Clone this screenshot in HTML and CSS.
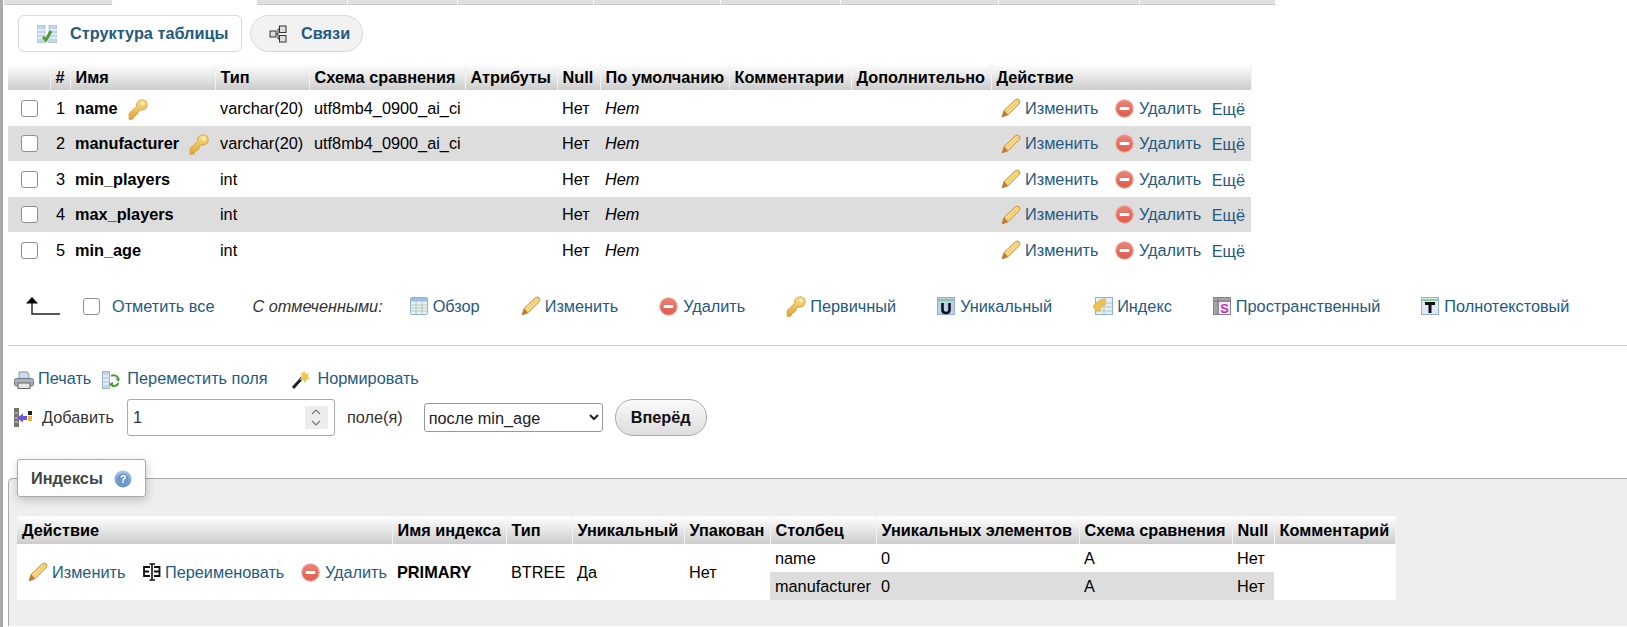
FILE: index.html
```html
<!DOCTYPE html>
<html lang="ru">
<head>
    <meta charset="UTF-8" />
    <title>Структура таблицы</title>
    <link rel="stylesheet" href="styles.css">
</head>
<body>

    <!-- shared icons -->
    <svg class="icon-defs" xmlns="http://www.w3.org/2000/svg">
        <defs>
            <linearGradient id="grad-key" x1="0" y1="0" x2="0" y2="1">
                <stop offset="0" stop-color="#fbe08a" />
                <stop offset="1" stop-color="#e0a52f" />
            </linearGradient>
            <linearGradient id="grad-del" x1="0" y1="0" x2="0" y2="1">
                <stop offset="0" stop-color="#ec8478" />
                <stop offset="1" stop-color="#dd5a4a" />
            </linearGradient>
            <linearGradient id="grad-help" x1="0" y1="0" x2="0" y2="1">
                <stop offset="0" stop-color="#a9c4e6" />
                <stop offset="1" stop-color="#5f8fc9" />
            </linearGradient>
        </defs>
        <symbol id="i-pencil" viewBox="0 0 20 20">
            <path d="M1 19 L3 12.5 L14.5 1.6 Q16.5 .4 18.2 2 Q19.6 3.8 18.3 5.4 L7 16.8 Z" fill="#f3cd6a" stroke="#c9953f" stroke-width="1" />
            <path d="M4.6 13 L15.6 2.6 M6.6 15 L17.4 4.4" stroke="#fbe9ae" stroke-width="1" fill="none" />
            <path d="M1 19 L3 12.5 L7 16.8 Z" fill="#b9793f" />
        </symbol>
        <symbol id="i-delete" viewBox="0 0 20 20">
            <circle cx="10" cy="10" r="9.2" fill="url(#grad-del)" stroke="#efa79d" stroke-width="1.2" />
            <rect x="5" y="8.4" width="10" height="3.2" rx=".6" fill="#fff" />
        </symbol>
        <symbol id="i-key" viewBox="0 0 20 21">
            <path d="M1 14.5 L8.5 7.5 Q8 3 11.5 1.2 Q15.5 -.2 18.3 2.4 Q20.4 5.6 18.2 9.2 Q15 12 11.8 11 L10 13 L10 15 L8 15 L8 17 L6 17 L5 20 L1.2 20.4 Z" fill="url(#grad-key)" stroke="#d19a34" stroke-width=".8" />
            <circle cx="14.8" cy="5" r="1.7" fill="#fdf3c8" />
        </symbol>
        <symbol id="i-struct" viewBox="0 0 20 18">
            <rect x="0" y="0" width="8" height="18" fill="#c3d5ec" stroke="#9db6d6" stroke-width=".8" />
            <rect x="12" y="0" width="8" height="18" fill="#c3d5ec" stroke="#9db6d6" stroke-width=".8" />
            <path d="M0 5 H8 M0 9 H8 M0 13 H8 M12 5 H20 M12 9 H20 M12 13 H20" stroke="#fff" stroke-width="1" />
            <path d="M6 12 L9 15 L14 6" fill="none" stroke="#4f9d2e" stroke-width="3" />
        </symbol>
        <symbol id="i-relation" viewBox="0 0 18 18">
            <path d="M6 9 H9 M9 4 V14 M9 4 H11 M9 14 H11" stroke="#333" stroke-width="1" fill="none" />
            <rect x="1" y="6" width="6" height="6" fill="#ddd" stroke="#333" />
            <rect x="10.5" y="1" width="6.5" height="6.5" fill="#ddd" stroke="#333" />
            <rect x="10.5" y="10.5" width="6.5" height="6.5" fill="#ddd" stroke="#333" />
        </symbol>
        <symbol id="i-arrow" viewBox="0 0 36 18">
            <path d="M8 3 V17 H36" fill="none" stroke="#222" stroke-width="1.4" />
            <path d="M8 0 L14 6.5 H2 Z" fill="#000" />
        </symbol>
        <symbol id="i-browse" viewBox="0 0 18 18">
            <rect x=".5" y=".5" width="17" height="17" rx="1" fill="#eaf1fa" stroke="#8fb0d8" />
            <rect x="1" y="1" width="16" height="3.5" fill="#9fbfe3" />
            <path d="M1 8 H17 M1 11 H17 M1 14 H17 M6 4 V17 M12 4 V17" stroke="#a9c3a0" stroke-width=".8" />
        </symbol>
        <symbol id="i-unique" viewBox="0 0 18 18">
            <rect x=".5" y=".5" width="17" height="17" fill="#bcd0ea" stroke="#8fb0d8" />
            <path d="M1 3 H17" stroke="#6fbf6a" stroke-width="1.4" />
            <path d="M5.5 6 V13 Q5.5 16 9 16 Q12.5 16 12.5 13 V6" fill="none" stroke="#111" stroke-width="2.6" />
        </symbol>
        <symbol id="i-index" viewBox="0 0 20 18">
            <rect x="2.5" y=".5" width="17" height="17" fill="#e6eef8" stroke="#8fb0d8" />
            <path d="M3 6 H19 M3 10 H19 M3 14 H19 M11 1 V17" stroke="#a9c3a0" stroke-width=".8" />
            <path d="M0 9 L7 3 L13 2 L12 8 L8 9 L7 14 L3 14 Z" fill="#f1c14f" stroke="#dca436" stroke-width=".6" />
        </symbol>
        <symbol id="i-fulltext" viewBox="0 0 18 18">
            <rect x=".5" y=".5" width="17" height="17" fill="#dfe9f6" stroke="#8fb0d8" />
            <path d="M1 3 H17" stroke="#6fbf6a" stroke-width="1.4" />
            <path d="M4 6.5 H14 M9 6.5 V16" stroke="#111" stroke-width="3" fill="none" />
        </symbol>
        <symbol id="i-print" viewBox="0 0 20 18">
            <path d="M5 8 V1 H13 L15 3 V8 Z" fill="#cfdbea" stroke="#7f97b3" />
            <rect x=".5" y="7.5" width="19" height="7.5" rx="2" fill="#a9b0b9" stroke="#6f7883" />
            <rect x="4" y="12" width="12" height="5.5" fill="#e6e6e6" stroke="#666" />
        </symbol>
        <symbol id="i-move" viewBox="0 0 18 18">
            <rect x=".5" y=".5" width="7" height="17" fill="#c3d5ec" stroke="#9db6d6" />
            <path d="M1 5 H7 M1 9 H7 M1 13 H7" stroke="#fff" />
            <path d="M9 5 A5 5 0 0 1 16.5 8" fill="none" stroke="#4d9f33" stroke-width="2" />
            <path d="M16.5 12 A5 5 0 0 1 9 14" fill="none" stroke="#4d9f33" stroke-width="2" />
            <path d="M13.5 7.5 H18 L16.5 11 Z M6.5 13 L11 11 V16 Z" fill="#4d9f33" />
        </symbol>
        <symbol id="i-wand" viewBox="0 0 18 18">
            <path d="M1 17 L10 7" stroke="#222" stroke-width="3" />
            <path d="M12.5 0 L13.5 3 L17 2 L15.5 5.5 L18 8 L14.5 8.5 L13.5 12 L11 9 L7.5 9 L10 6 L9 2.5 Z" fill="#f2c64e" />
        </symbol>
        <symbol id="i-add" viewBox="0 0 18 19">
            <rect x="0" y="0" width="5" height="19" fill="#77736f" />
            <path d="M1 5 H4 M1 10 H4 M1 14 H4" stroke="#ddd" />
            <path d="M3 10 L9 5.5 V8 H13 V12 H9 V14.5 Z" fill="#6a55d8" />
            <rect x="14" y="3" width="4" height="4" fill="#222" />
            <rect x="14" y="8" width="4" height="5" fill="#e8b33a" />
        </symbol>
        <symbol id="i-rename" viewBox="0 0 18 18">
            <path d="M7 4 H1 V13 H7 M1 8.5 H6" fill="none" stroke="#111" stroke-width="1.8" />
            <path d="M9 1 V17 M6.5 1 H12 M6.5 17 H12" fill="none" stroke="#111" stroke-width="1.6" />
            <path d="M11 4 H16.5 V13 H11 M11 8.5 H16" fill="none" stroke="#111" stroke-width="1.8" />
        </symbol>
    </svg>

    <div class="tabs">
        <span class="tab tab-first"></span>
        <span class="tab tab-active"></span>
        <span class="tab tab-w3"></span>
        <span class="tab tab-w4"></span>
        <span class="tab tab-w5"></span>
        <span class="tab tab-w6"></span>
        <span class="tab tab-w7"></span>
        <span class="tab tab-w8"></span>
        <span class="tab tab-w9"></span>
        <span class="tab tab-w10"></span>
    </div>

    <div class="subtabs">
        <a class="subtab subtab-active" href="#">
            <svg class="ic-struct"><use href="#i-struct" /></svg>Структура таблицы
        </a>
        <a class="subtab subtab-plain" href="#">
            <svg class="ic-18"><use href="#i-relation" /></svg>Связи
        </a>
    </div>

    <table class="data structure">
        <colgroup>
            <col class="s1"><col class="s2"><col class="s3"><col class="s4"><col class="s5"><col class="s6">
            <col class="s7"><col class="s8"><col class="s9"><col class="s10"><col class="s11">
        </colgroup>
        <thead>
            <tr>
                <th></th><th class="num">#</th><th>Имя</th><th>Тип</th><th>Схема сравнения</th><th>Атрибуты</th>
                <th>Null</th><th>По умолчанию</th><th>Комментарии</th><th>Дополнительно</th><th>Действие</th>
            </tr>
        </thead>
        <tbody>
            <tr>
                <td class="check"><input type="checkbox" class="cb"></td>
                <td class="num">1</td>
                <td><span class="col-name">name</span><svg class="ic-key"><use href="#i-key" /></svg></td>
                <td>varchar(20)</td><td>utf8mb4_0900_ai_ci</td><td></td><td>Нет</td><td><em>Нет</em></td><td></td><td></td>
                <td class="actions">
                    <a class="act" href="#"><svg class="ic-edit"><use href="#i-pencil" /></svg>Изменить</a>
                    <a class="act act-del" href="#"><svg class="ic-del"><use href="#i-delete" /></svg>Удалить</a>
                    <a class="act act-more" href="#">Ещё</a>
                </td>
            </tr>
            <tr>
                <td class="check"><input type="checkbox" class="cb"></td>
                <td class="num">2</td>
                <td><span class="col-name">manufacturer</span><svg class="ic-key"><use href="#i-key" /></svg></td>
                <td>varchar(20)</td><td>utf8mb4_0900_ai_ci</td><td></td><td>Нет</td><td><em>Нет</em></td><td></td><td></td>
                <td class="actions">
                    <a class="act" href="#"><svg class="ic-edit"><use href="#i-pencil" /></svg>Изменить</a>
                    <a class="act act-del" href="#"><svg class="ic-del"><use href="#i-delete" /></svg>Удалить</a>
                    <a class="act act-more" href="#">Ещё</a>
                </td>
            </tr>
            <tr>
                <td class="check"><input type="checkbox" class="cb"></td>
                <td class="num">3</td>
                <td><span class="col-name">min_players</span></td>
                <td>int</td><td></td><td></td><td>Нет</td><td><em>Нет</em></td><td></td><td></td>
                <td class="actions">
                    <a class="act" href="#"><svg class="ic-edit"><use href="#i-pencil" /></svg>Изменить</a>
                    <a class="act act-del" href="#"><svg class="ic-del"><use href="#i-delete" /></svg>Удалить</a>
                    <a class="act act-more" href="#">Ещё</a>
                </td>
            </tr>
            <tr>
                <td class="check"><input type="checkbox" class="cb"></td>
                <td class="num">4</td>
                <td><span class="col-name">max_players</span></td>
                <td>int</td><td></td><td></td><td>Нет</td><td><em>Нет</em></td><td></td><td></td>
                <td class="actions">
                    <a class="act" href="#"><svg class="ic-edit"><use href="#i-pencil" /></svg>Изменить</a>
                    <a class="act act-del" href="#"><svg class="ic-del"><use href="#i-delete" /></svg>Удалить</a>
                    <a class="act act-more" href="#">Ещё</a>
                </td>
            </tr>
            <tr>
                <td class="check"><input type="checkbox" class="cb"></td>
                <td class="num">5</td>
                <td><span class="col-name">min_age</span></td>
                <td>int</td><td></td><td></td><td>Нет</td><td><em>Нет</em></td><td></td><td></td>
                <td class="actions">
                    <a class="act" href="#"><svg class="ic-edit"><use href="#i-pencil" /></svg>Изменить</a>
                    <a class="act act-del" href="#"><svg class="ic-del"><use href="#i-delete" /></svg>Удалить</a>
                    <a class="act act-more" href="#">Ещё</a>
                </td>
            </tr>
        </tbody>
    </table>

    <div class="bulk">
        <svg class="ic-arrow"><use href="#i-arrow" /></svg>
        <input type="checkbox" class="cb bulk-cb">
        <a class="link" href="#">Отметить все</a>
        <em class="bulk-label">С отмеченными:</em>
        <div class="bulk-actions">
            <a class="act" href="#"><svg class="ic-18"><use href="#i-browse" /></svg>Обзор</a>
            <a class="act" href="#"><svg class="ic-edit"><use href="#i-pencil" /></svg>Изменить</a>
            <a class="act" href="#"><svg class="ic-del"><use href="#i-delete" /></svg>Удалить</a>
            <a class="act" href="#"><svg class="ic-key2"><use href="#i-key" /></svg>Первичный</a>
            <a class="act" href="#"><svg class="ic-18"><use href="#i-unique" /></svg>Уникальный</a>
            <a class="act" href="#"><svg class="ic-index"><use href="#i-index" /></svg>Индекс</a>
            <a class="act" href="#">
                <svg class="ic-18" viewBox="0 0 18 18">
                    <rect x=".5" y=".5" width="17" height="17" fill="#a8a4ad" stroke="#87838d" />
                    <path d="M1 4 H17 M5 1 V17" stroke="#6d6a72" stroke-width=".8" />
                    <rect x="6" y="5" width="11" height="12" fill="#f2ecf3" />
                    <text class="icon-letter icon-letter-s" x="11.5" y="15.5" text-anchor="middle">S</text>
                </svg>Пространственный
            </a>
            <a class="act" href="#"><svg class="ic-18"><use href="#i-fulltext" /></svg>Полнотекстовый</a>
        </div>
    </div>

    <hr class="divider">

    <div class="tools">
        <a class="act" href="#"><svg class="ic-print"><use href="#i-print" /></svg>Печать</a>
        <a class="act tool-move" href="#"><svg class="ic-18"><use href="#i-move" /></svg>Переместить поля</a>
        <a class="act tool-norm" href="#"><svg class="ic-18"><use href="#i-wand" /></svg>Нормировать</a>
    </div>

    <form class="add-row">
        <svg class="ic-add"><use href="#i-add" /></svg>
        <label class="add-label" for="add-count">Добавить</label>
        <div class="number-box">
            <input type="text" id="add-count" class="number-input" value="1">
            <span class="spinner">
                <svg viewBox="0 0 10 6"><path d="M1 5 L5 1 L9 5" /></svg>
                <svg viewBox="0 0 10 6"><path d="M1 1 L5 5 L9 1" /></svg>
            </span>
        </div>
        <span class="add-unit">поле(я)</span>
        <select class="add-select"><option>после min_age</option></select>
        <button type="button" class="go">Вперёд</button>
    </form>

    <fieldset class="indexes">
        <legend class="indexes-title">Индексы<svg class="ic-help" viewBox="0 0 18 18">
            <circle cx="9" cy="9" r="8.5" fill="url(#grad-help)" />
            <circle cx="9" cy="9" r="5.6" fill="#6a96cd" />
            <text class="icon-letter icon-letter-q" x="9" y="13" text-anchor="middle">?</text>
        </svg></legend>
        <table class="data index">
            <colgroup>
                <col class="x1"><col class="x2"><col class="x3"><col class="x4"><col class="x5">
                <col class="x6"><col class="x7"><col class="x8"><col class="x9"><col class="x10">
            </colgroup>
            <thead>
                <tr>
                    <th>Действие</th><th>Имя индекса</th><th>Тип</th><th>Уникальный</th><th>Упакован</th>
                    <th>Столбец</th><th>Уникальных элементов</th><th>Схема сравнения</th><th>Null</th><th>Комментарий</th>
                </tr>
            </thead>
            <tbody>
                <tr>
                    <td rowspan="2" class="index-actions">
                        <a class="act" href="#"><svg class="ic-edit"><use href="#i-pencil" /></svg>Изменить</a>
                        <a class="act act-ix2" href="#"><svg class="ic-18"><use href="#i-rename" /></svg>Переименовать</a>
                        <a class="act act-ix3" href="#"><svg class="ic-del"><use href="#i-delete" /></svg>Удалить</a>
                    </td>
                    <td rowspan="2"><strong>PRIMARY</strong></td>
                    <td rowspan="2">BTREE</td>
                    <td rowspan="2">Да</td>
                    <td rowspan="2">Нет</td>
                    <td>name</td><td>0</td><td>A</td><td>Нет</td>
                    <td rowspan="2"></td>
                </tr>
                <tr class="grey">
                    <td>manufacturer</td><td>0</td><td>A</td><td>Нет</td>
                </tr>
            </tbody>
        </table>
    </fieldset>

</body>
</html>
```

FILE: styles.css
```css
html, body {
    height: 100%;
}
body {
    margin: 0;
    border-left: 3px solid #aaa;
    background-color: #fff;
    color: #000;
    font-family: "Liberation Sans", Arial, sans-serif;
    font-size: 16.3px;
    overflow: hidden;
}
a {
    color: #235a81;
    text-decoration: none;
}
svg {
    flex: none;
}
.icon-defs {
    display: block;
    width: 0;
    height: 0;
}
.icon-letter {
    font-family: "Liberation Sans", Arial, sans-serif;
    font-weight: bold;
}
.icon-letter-s {
    font-size: 13px;
    fill: #c033b0;
}
.icon-letter-q {
    font-size: 11px;
    fill: #fff;
}

/* top tab strip, only its lower edge is in view */
.tabs {
    display: flex;
    height: 5px;
    padding-left: 1px;
}
.tab {
    background-color: #e0e0e0;
    border-bottom: 1px solid #ccc;
    border-right: 1px solid #fff;
    box-sizing: border-box;
}
.tab-first { width: 109px; }
.tab-active { width: 144px; background-color: #fff; border-bottom-color: #fff; }
.tab-w3 { width: 91px; }
.tab-w4 { width: 110px; }
.tab-w5 { width: 136px; }
.tab-w6 { width: 127px; }
.tab-w7 { width: 120px; }
.tab-w8 { width: 158px; }
.tab-w9 { width: 141px; }
.tab-w10 { width: 136px; }

.subtabs {
    display: flex;
    gap: 8px;
    margin: 10px 0 12px 15px;
}
.subtab {
    display: flex;
    align-items: center;
    box-sizing: border-box;
    height: 37px;
    border: 1px solid #d8d8d8;
    font-weight: bold;
    white-space: nowrap;
}
.subtab-active {
    width: 224px;
    padding-left: 18px;
    border-radius: 6px;
    background-color: #fff;
}
.subtab-plain {
    width: 113px;
    padding-left: 18px;
    border-radius: 20px;
    background-color: #f2f2f2;
    gap: 13px;
}
.ic-struct {
    width: 20px;
    height: 18px;
    margin-right: 13px;
}
.ic-18 {
    width: 18px;
    height: 18px;
    margin-right: 1px;
}
.ic-del {
    width: 19px;
    height: 19px;
    margin-right: 1px;
}
.ic-edit {
    width: 20px;
    height: 20px;
}
.ic-key {
    width: 20px;
    height: 21px;
    margin: -4px 0 -4px 10px;
    vertical-align: middle;
}
.ic-key2 {
    width: 20px;
    height: 21px;
}
.ic-index {
    width: 20px;
    height: 18px;
}
.ic-print {
    width: 20px;
    height: 18px;
}
.ic-add {
    width: 18px;
    height: 19px;
}
.ic-arrow {
    width: 36px;
    height: 18px;
}
.ic-help {
    width: 18px;
    height: 18px;
    margin-left: 11px;
    vertical-align: -4px;
}

/* tables */
.data {
    border-collapse: collapse;
    table-layout: fixed;
    background-color: #fff;
}
.data th {
    height: 26px;
    padding: 0 5px;
    background: linear-gradient(#fff, #ccc);
    border-right: 1px solid #f3f3f3;
    text-align: left;
    white-space: nowrap;
    box-sizing: border-box;
}
.data td {
    padding: 0 5px;
    white-space: nowrap;
    box-sizing: border-box;
}
.data th.num, .data td.num {
    padding: 0 5px 0 0;
    text-align: right;
}
.structure {
    width: 1243px;
    margin-left: 5px;
}
.structure tbody tr:nth-child(odd) { height: 36px; }
.structure tbody tr:nth-child(even) { height: 35px; background-color: #ddd; }
.s1 { width: 42px; }
.s2 { width: 20px; }
.s3 { width: 145px; }
.s4 { width: 94px; }
.s5 { width: 156px; }
.s6 { width: 92px; }
.s7 { width: 43px; }
.s8 { width: 129px; }
.s9 { width: 122px; }
.s10 { width: 140px; }
.s11 { width: 260px; }
.col-name {
    font-weight: bold;
}
.data td.check {
    padding: 0 0 0 13px;
}
.cb {
    display: block;
    appearance: none;
    width: 17px;
    height: 17px;
    margin: 0;
    border: 1px solid #8f8f8f;
    border-radius: 3px;
    background-color: #fff;
}
.act {
    display: inline-flex;
    align-items: center;
    gap: 4px;
    vertical-align: middle;
}
.data td.actions {
    padding-left: 10px;
}
.act-del { margin-left: 12px; }
.act-more { margin-left: 6px; padding-top: 2px; }

/* bulk actions under the table */
.bulk {
    display: flex;
    align-items: center;
    height: 36px;
    margin: 20px 0 0 21px;
}
.bulk-cb {
    margin-left: 23px;
}
.link {
    margin-left: 12px;
}
.bulk-label {
    margin-left: 38px;
    color: #333;
}
.bulk-actions {
    display: flex;
    gap: 41px;
    margin-left: 27px;
}
.divider {
    height: 1px;
    margin: 21px 0 0 5px;
    border: 0;
    background-color: #ccc;
}

.tools {
    display: flex;
    align-items: center;
    margin: 21px 0 0 11px;
}
.tools svg {
    margin-top: 4px;
}
.tool-move { margin-left: 11px; gap: 6px; }
.tool-norm { margin-left: 25px; gap: 6px; }

.add-row {
    display: flex;
    align-items: center;
    margin: 10px 0 0 11px;
}
.add-label {
    margin-left: 10px;
    color: #333;
}
.number-box {
    display: flex;
    align-items: center;
    box-sizing: border-box;
    width: 208px;
    height: 37px;
    margin-left: 13px;
    padding: 0 6px 0 5px;
    border: 1px solid #aaa;
    border-radius: 3px;
    background-color: #fff;
}
.number-input {
    flex: 1;
    width: 100px;
    padding: 0;
    border: 0;
    outline: 0;
    font: inherit;
    color: #333;
}
.spinner {
    display: flex;
    flex-direction: column;
    align-items: center;
    justify-content: center;
    gap: 5px;
    width: 23px;
    height: 23px;
    background-color: #ececec;
}
.spinner svg {
    width: 10px;
    height: 6px;
    fill: none;
    stroke: #777;
    stroke-width: 1.2;
}
.add-unit {
    margin-left: 12px;
    color: #333;
}
.add-select {
    box-sizing: border-box;
    width: 179px;
    height: 29px;
    margin-left: 21px;
    padding: 0;
    border: 1px solid #999;
    border-radius: 3px;
    background-color: #fff;
    font: inherit;
    color: #222;
}
.go {
    box-sizing: border-box;
    width: 92px;
    height: 37px;
    margin-left: 12px;
    border: 1px solid #aaa;
    border-radius: 18px;
    background: linear-gradient(#fafafa, #ddd);
    font: inherit;
    font-weight: bold;
    color: #111;
}

/* indexes box */
.indexes {
    box-sizing: border-box;
    height: 167px;
    margin: 23px 0 0 5px;
    padding: 0 8px;
    border: 0;
    border-top: 1px solid #aaa;
    border-left: 1px solid #aaa;
    border-top-left-radius: 5px;
    background-color: #eee;
}
.indexes-title {
    box-sizing: border-box;
    width: 129px;
    height: 38px;
    padding: 0 0 0 13px;
    border: 1px solid #aaa;
    border-radius: 3px;
    background-color: #fff;
    box-shadow: 1px 3px 10px rgba(0,0,0,0.2);
    font-weight: bold;
    line-height: 36px;
    color: #444;
}
.index {
    width: 1378px;
    margin-top: 19px;
}
.index th { height: 28px; }
.index tbody tr { height: 28px; }
.index tbody tr.grey td { background-color: #ddd; }
.x1 { width: 375px; }
.x2 { width: 114px; }
.x3 { width: 66px; }
.x4 { width: 112px; }
.x5 { width: 86px; }
.x6 { width: 106px; }
.x7 { width: 203px; }
.x8 { width: 153px; }
.x9 { width: 42px; }
.x10 { width: 121px; }
.data td.index-actions {
    padding-left: 11px;
    background-color: #fff;
}
.act-ix2 { margin-left: 13px; gap: 3px; }
.act-ix3 { margin-left: 12px; }
```
